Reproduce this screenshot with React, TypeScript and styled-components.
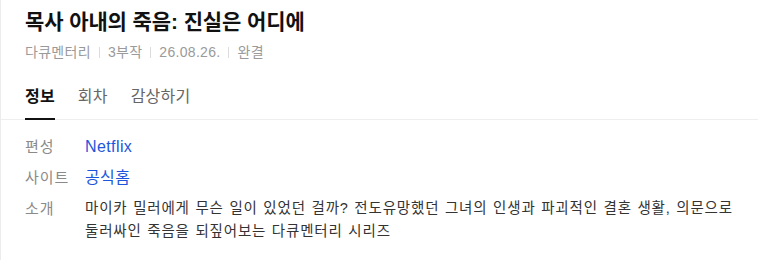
import React, { useState } from "react";
import styled, { createGlobalStyle } from "styled-components";

const GlobalStyle = createGlobalStyle`
  html, body {
    margin: 0;
    padding: 0;
    background: #ffffff;
  }
  body {
    font-family: "Liberation Sans", "Noto Sans CJK KR", sans-serif;
    color: #111111;
  }
`;

const Page = styled.div`
  width: 758px;
  height: 260px;
  box-sizing: border-box;
  border-left: 1px solid #ececec;
  background: #fff;
`;

const Header = styled.div`
  padding: 7px 24px 0;
`;

const Title = styled.h1`
  margin: 0;
  font-size: 21px;
  font-weight: 700;
  line-height: 30px;
  letter-spacing: -0.1px;
  color: #111;
`;

const Meta = styled.ul`
  display: flex;
  align-items: center;
  margin: 5px 0 0;
  padding: 0;
  list-style: none;
  font-size: 14px;
  line-height: 20px;
  letter-spacing: 0.3px;
  color: #9a9a9a;
`;

const MetaItem = styled.li`
  display: flex;
  align-items: center;
  & + &::before {
    content: "";
    display: inline-block;
    width: 1px;
    height: 11px;
    margin: 0 8px;
    background: #dcdcdc;
  }
`;

const Tabs = styled.nav`
  display: flex;
  gap: 23px;
  margin-top: 23px;
  padding: 0 24px;
  border-bottom: 1px solid #eeeeee;
`;

const Tab = styled.button<{ $active: boolean }>`
  padding: 0 0 9px;
  margin: 0 0 -1px;
  border: 0;
  border-bottom: 2px solid ${(p) => (p.$active ? "#111" : "transparent")};
  background: none;
  font-family: inherit;
  font-size: 16px;
  line-height: 24px;
  letter-spacing: 0.2px;
  font-weight: ${(p) => (p.$active ? 700 : 400)};
  color: ${(p) => (p.$active ? "#111" : "#666")};
  cursor: pointer;
`;

const InfoList = styled.dl`
  display: grid;
  grid-template-columns: 60px 1fr;
  row-gap: 8px;
  margin: 0;
  padding: 15px 12px 0 24px;
  font-size: 15px;
  line-height: 23px;
  letter-spacing: 1px;
`;

const Label = styled.dt`
  margin: 0;
  color: #8a8a8a;
`;

const Value = styled.dd<{ $link?: boolean }>`
  margin: 0;
  color: ${(p) => (p.$link ? "#1d55dc" : "#333")};
  letter-spacing: ${(p) => (p.$link ? "0.4px" : "0.82px")};
  word-spacing: ${(p) => (p.$link ? "0" : "0.8px")};
  font-size: ${(p) => (p.$link ? "16px" : "14.5px")};
  word-break: keep-all;
`;

const LinkText = styled.a`
  color: inherit;
  text-decoration: none;
`;

const tabs = ["정보", "회차", "감상하기"];
const meta = ["다큐멘터리", "3부작", "26.08.26.", "완결"];

export default function App() {
  const [active, setActive] = useState(0);
  return (
    <>
      <GlobalStyle />
      <Page>
        <Header>
          <Title>목사 아내의 죽음: 진실은 어디에</Title>
          <Meta>
            {meta.map((m) => (
              <MetaItem key={m}>{m}</MetaItem>
            ))}
          </Meta>
        </Header>
        <Tabs>
          {tabs.map((t, i) => (
            <Tab key={t} $active={i === active} onClick={() => setActive(i)}>
              {t}
            </Tab>
          ))}
        </Tabs>
        <InfoList>
          <Label>편성</Label>
          <Value $link>
            <LinkText href="#">Netflix</LinkText>
          </Value>
          <Label>사이트</Label>
          <Value $link>
            <LinkText href="#">공식홈</LinkText>
          </Value>
          <Label>소개</Label>
          <Value>
            마이카 밀러에게 무슨 일이 있었던 걸까? 전도유망했던 그녀의 인생과 파괴적인 결혼 생활, 의문으로
            둘러싸인 죽음을 되짚어보는 다큐멘터리 시리즈
          </Value>
        </InfoList>
      </Page>
    </>
  );
}
